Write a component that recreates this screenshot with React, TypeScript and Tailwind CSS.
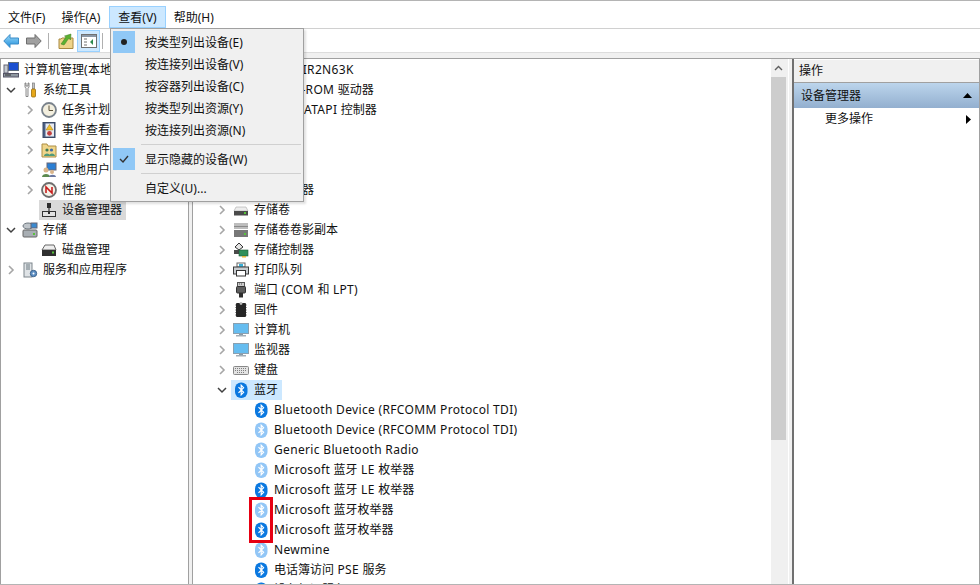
import { ReactNode } from 'react'

type IconName =
  | 'computer' | 'tools' | 'clock' | 'event' | 'share' | 'users' | 'perf' | 'device'
  | 'storage' | 'disk' | 'services' | 'volume' | 'shadow' | 'controller' | 'printer'
  | 'port' | 'chip' | 'monitor' | 'keyboard' | 'btDark' | 'btLight'

function Bluetooth({ light }: { light?: boolean }) {
  return (
    <svg width="16" height="16" viewBox="0 0 16 16">
      <rect x="2" y="0.5" width="12.5" height="15.5" rx="6" fill={light ? '#92c6f6' : '#0a78e0'} />
      <path d="M5.5 5.2 10.6 10.3 8.2 12.8V3.2L10.6 5.7 5.5 10.8" fill="none" stroke="#fff" strokeWidth="1.2" />
    </svg>
  )
}

function TreeIcon({ name }: { name: IconName }) {
  if (name === 'btDark') return <Bluetooth />
  if (name === 'btLight') return <Bluetooth light />
  const shapes: Record<string, ReactNode> = {
    computer: (
      <>
        <rect x="5.5" y="0.5" width="10" height="8" fill="#1a4fd0" stroke="#5b6b7b" />
        <rect x="1" y="3" width="4" height="8" fill="#c4cad0" stroke="#667" />
        <rect x="0.5" y="11.5" width="15" height="3.5" fill="#8f98a1" stroke="#556" />
        <path d="M2 13H8" stroke="#333" />
      </>
    ),
    tools: (
      <>
        <path d="M3 1V5L4 6.5V14.5H6V6.5L7 5V1L6 1V4H4V1Z" fill="#f4f4f4" stroke="#6f6f6f" strokeWidth=".8" />
        <rect x="10.5" y="1" width="2" height="6" fill="#c4c4c4" stroke="#7c7c7c" strokeWidth=".7" />
        <rect x="9.5" y="7" width="4" height="8" rx="1" fill="#e7a81a" stroke="#9a6f0c" strokeWidth=".8" />
      </>
    ),
    clock: (
      <>
        <circle cx="8" cy="8" r="7" fill="#f3efdf" stroke="#7a838c" strokeWidth="1.8" />
        <path d="M8 3.5V8.5H12" fill="none" stroke="#5c523a" />
      </>
    ),
    event: (
      <>
        <rect x="2" y="0.5" width="12" height="15" fill="#4a5f86" stroke="#3c4a66" />
        <rect x="4.5" y="1.5" width="8.5" height="13" fill="#e9ebf0" />
        <path d="M8.5 2.5 12 8H5Z" fill="#f2c12e" stroke="#9a7714" strokeWidth=".5" />
        <circle cx="8.5" cy="11.3" r="2.4" fill="#c23f3f" />
      </>
    ),
    share: (
      <>
        <path d="M1 2H6L7 4H15V15H1Z" fill="#efd58a" stroke="#ad8e44" />
        <circle cx="6" cy="8" r="1.6" fill="#3f7a55" />
        <circle cx="10.5" cy="8" r="1.6" fill="#3f6aa8" />
        <path d="M3 14C3 10.5 9 10.5 9 14ZM8 14C8 10.5 14 10.5 14 14Z" fill="#4f9a7a" />
      </>
    ),
    users: (
      <>
        <rect x="6" y="1" width="9" height="7" fill="#2b7fd4" stroke="#667" />
        <circle cx="5" cy="8" r="2.5" fill="#d9b48a" />
        <path d="M1 15C1 11 9 11 9 15Z" fill="#5c8a4f" />
        <circle cx="11" cy="10" r="2" fill="#d9b48a" />
        <path d="M8 15C8 12 15 12 15 15Z" fill="#6a78a0" />
      </>
    ),
    perf: (
      <>
        <circle cx="8" cy="8" r="7" fill="#f5f2e8" stroke="#6e6e6e" strokeWidth="1.8" />
        <path d="M5 11V5L11 11V5" fill="none" stroke="#c81e1e" strokeWidth="1.6" />
      </>
    ),
    device: (
      <>
        <rect x="6" y="1" width="4" height="5" fill="#2c2c2c" />
        <rect x="7" y="6" width="2" height="3" fill="#777" />
        <rect x="1.5" y="9.5" width="13" height="5" fill="#e2e2e2" stroke="#333" />
        <rect x="7" y="10" width="2" height="2" fill="#2b2b2b" />
      </>
    ),
    storage: (
      <>
        <ellipse cx="6" cy="4" rx="5" ry="3" fill="#bfc5ca" stroke="#6d767e" />
        <rect x="9" y="1" width="6" height="5" fill="#3b8ad0" stroke="#667" />
        <rect x="1" y="8" width="14" height="7" rx="1" fill="#a8aeb3" stroke="#666" />
        <rect x="11" y="11" width="2" height="2" fill="#59c23a" />
      </>
    ),
    disk: (
      <>
        <path d="M4 3H13L15 8H1Z" fill="#eee" stroke="#666" />
        <rect x="1" y="8" width="14" height="6" fill="#303030" />
        <rect x="11" y="9.5" width="2" height="2" fill="#57c43a" />
      </>
    ),
    services: (
      <>
        <rect x="2" y="1" width="8" height="14" fill="#dfe3e6" stroke="#7c858c" />
        <path d="M4 3H8M4 5H8M4 7H8" stroke="#6a7880" />
        <circle cx="11.5" cy="11.5" r="3.2" fill="#5d8fc4" stroke="#3d628c" />
        <circle cx="11.5" cy="11.5" r="1" fill="#fff" />
      </>
    ),
    volume: (
      <>
        <path d="M3 5H13L15 9H1Z" fill="#ededed" stroke="#aaa" strokeWidth=".6" />
        <rect x="1" y="9" width="14" height="4.5" fill="#4a4a4a" />
        <rect x="11" y="10" width="2" height="2" fill="#57c43a" />
      </>
    ),
    shadow: (
      <>
        <rect x="1" y="1" width="14" height="6" fill="#bdbdbd" />
        <path d="M1 4.5H15" stroke="#8a8a8a" />
        <rect x="1" y="8" width="14" height="7" fill="#777" />
        <rect x="11" y="11" width="2" height="2" fill="#57c43a" />
      </>
    ),
    controller: (
      <>
        <path d="M2 5L6 1 10 5 6 8Z" fill="#e4e4e4" stroke="#333" />
        <rect x="1" y="8" width="6" height="4" fill="#4a4a4a" />
        <rect x="6" y="8" width="9" height="6" fill="#2f8f5a" stroke="#1f5a38" strokeWidth=".6" />
        <rect x="9" y="14" width="4" height="1.5" fill="#e2b33c" />
      </>
    ),
    printer: (
      <>
        <rect x="4" y="1" width="8" height="4" fill="#fff" stroke="#666" />
        <rect x="6" y="2" width="4" height="3" fill="#38b0d8" />
        <rect x="0.5" y="5" width="15" height="7" fill="#c9cdd1" stroke="#3c3c3c" />
        <rect x="3.5" y="8.5" width="9" height="5.5" fill="#fff" stroke="#333" />
      </>
    ),
    port: (
      <>
        <rect x="4.5" y="0.5" width="7" height="4" fill="#ccc" stroke="#555" />
        <path d="M6 2H10" stroke="#555" strokeDasharray="1 1" />
        <rect x="3.5" y="4.5" width="9" height="6.5" rx="1" fill="#5e5e5e" stroke="#333" />
        <rect x="6" y="11" width="4" height="4.5" fill="#2e2e2e" />
      </>
    ),
    chip: (
      <>
        <rect x="3" y="1" width="10" height="14" rx="1" fill="#262626" />
        <path d="M2 3H3M2 5.5H3M2 8H3M2 10.5H3M2 13H3M13 3H14M13 5.5H14M13 8H14M13 10.5H14M13 13H14" stroke="#999" />
        <circle cx="8" cy="1.5" r="1.4" fill="#bbb" />
      </>
    ),
    monitor: (
      <>
        <rect x="0.5" y="1.5" width="15" height="10" fill="#66bdf0" stroke="#8aa0b0" />
        <rect x="6" y="12" width="4" height="1" fill="#8a9aa6" />
        <rect x="3" y="13" width="10" height="1.5" fill="#a3aeb6" />
      </>
    ),
    keyboard: (
      <>
        <rect x="0.5" y="4.5" width="15" height="8" rx="1" fill="#e3e3e3" stroke="#888" />
        <path d="M2 6.5H14M2 8.5H14M4 10.5H12" stroke="#7f7f7f" strokeDasharray="1 1" />
      </>
    ),
  }
  return (
    <svg width="16" height="16" viewBox="0 0 16 16">
      {shapes[name]}
    </svg>
  )
}

function Chevron({ open }: { open?: boolean }) {
  return (
    <svg width="10" height="10" viewBox="0 0 10 10" className="shrink-0">
      {open ? (
        <path d="M1 3 5 7 9 3" fill="none" stroke="#404040" strokeWidth="1.5" />
      ) : (
        <path d="M3 1 7 5 3 9" fill="none" stroke="#a6a6a6" strokeWidth="1.6" />
      )}
    </svg>
  )
}

// latin runs render a little narrower than Segoe UI, so they get some tracking
function Label({ text }: { text: string }) {
  const parts = text.split(/([\x00-\x7f]+)/).filter(Boolean)
  return (
    <span>
      {parts.map((p, i) =>
        /^[\x00-\x7f]/.test(p) ? (
          <span key={i} className="tracking-[0.33px]">{p}</span>
        ) : (
          <span key={i}>{p}</span>
        ),
      )}
    </span>
  )
}

type RowProps = {
  indent: string
  icon: IconName
  label: string
  state?: 'open' | 'closed'
  selected?: string
  root?: boolean
}

function Row({ indent, icon, label, state, selected, root }: RowProps) {
  return (
    <div className={`flex h-5 items-center whitespace-nowrap ${indent}`}>
      {!root && (
        <span className="flex w-[14px] shrink-0 items-center">
          {state && <Chevron open={state === 'open'} />}
        </span>
      )}
      <span className={`flex h-5 items-center gap-[5px] pl-[2px] pr-[4px] ${selected ?? ''}`}>
        <TreeIcon name={icon} />
        <Label text={label} />
      </span>
    </div>
  )
}

const leftRows: RowProps[] = [
  { indent: 'pl-0', icon: 'computer', label: '计算机管理(本地)', root: true },
  { indent: 'pl-[5px]', icon: 'tools', label: '系统工具', state: 'open' },
  { indent: 'pl-[24px]', icon: 'clock', label: '任务计划程序', state: 'closed' },
  { indent: 'pl-[24px]', icon: 'event', label: '事件查看器', state: 'closed' },
  { indent: 'pl-[24px]', icon: 'share', label: '共享文件夹', state: 'closed' },
  { indent: 'pl-[24px]', icon: 'users', label: '本地用户和组', state: 'closed' },
  { indent: 'pl-[24px]', icon: 'perf', label: '性能', state: 'closed' },
  { indent: 'pl-[24px]', icon: 'device', label: '设备管理器', selected: 'bg-[#d9d9d9]' },
  { indent: 'pl-[5px]', icon: 'storage', label: '存储', state: 'open' },
  { indent: 'pl-[24px]', icon: 'disk', label: '磁盘管理' },
  { indent: 'pl-[5px]', icon: 'services', label: '服务和应用程序', state: 'closed' },
]

const hw = 'pl-[24px]'
const child = 'pl-[44px]'
const centerRows: RowProps[] = [
  { indent: 'pl-[4px]', icon: 'computer', label: 'DESKTOP-QIR2N63K', state: 'open' },
  { indent: hw, icon: 'volume', label: 'DVD/CD-ROM 驱动器', state: 'closed' },
  { indent: hw, icon: 'controller', label: 'IDE ATA/ATAPI 控制器', state: 'closed' },
  { indent: hw, icon: 'port', label: '便携设备', state: 'closed' },
  { indent: hw, icon: 'chip', label: '处理器', state: 'closed' },
  { indent: hw, icon: 'chip', label: '传感器', state: 'closed' },
  { indent: hw, icon: 'volume', label: '磁盘驱动器', state: 'closed' },
  { indent: hw, icon: 'volume', label: '存储卷', state: 'closed' },
  { indent: hw, icon: 'shadow', label: '存储卷卷影副本', state: 'closed' },
  { indent: hw, icon: 'controller', label: '存储控制器', state: 'closed' },
  { indent: hw, icon: 'printer', label: '打印队列', state: 'closed' },
  { indent: hw, icon: 'port', label: '端口 (COM 和 LPT)', state: 'closed' },
  { indent: hw, icon: 'chip', label: '固件', state: 'closed' },
  { indent: hw, icon: 'monitor', label: '计算机', state: 'closed' },
  { indent: hw, icon: 'monitor', label: '监视器', state: 'closed' },
  { indent: hw, icon: 'keyboard', label: '键盘', state: 'closed' },
  { indent: hw, icon: 'btDark', label: '蓝牙', state: 'open', selected: 'bg-[#cce8ff]' },
  { indent: child, icon: 'btDark', label: 'Bluetooth Device (RFCOMM Protocol TDI)' },
  { indent: child, icon: 'btLight', label: 'Bluetooth Device (RFCOMM Protocol TDI)' },
  { indent: child, icon: 'btLight', label: 'Generic Bluetooth Radio' },
  { indent: child, icon: 'btLight', label: 'Microsoft 蓝牙 LE 枚举器' },
  { indent: child, icon: 'btDark', label: 'Microsoft 蓝牙 LE 枚举器' },
  { indent: child, icon: 'btLight', label: 'Microsoft 蓝牙枚举器' },
  { indent: child, icon: 'btDark', label: 'Microsoft 蓝牙枚举器' },
  { indent: child, icon: 'btLight', label: 'Newmine' },
  { indent: child, icon: 'btDark', label: '电话簿访问 PSE 服务' },
  { indent: child, icon: 'btDark', label: '设备标识服务' },
]

const menuItems = ['按类型列出设备(E)', '按连接列出设备(V)', '按容器列出设备(C)', '按类型列出资源(Y)', '按连接列出资源(N)']

function ViewMenu() {
  return (
    <div className="absolute left-[110px] top-[27px] z-10 flex w-[194px] flex-col border border-[#a0a0a0] bg-[#f0f0f0] p-[2px] text-[12px] shadow-[2px_2px_2px_rgba(0,0,0,0.12)]">
      {menuItems.map((item, i) => (
        <div key={item} className="flex h-[22px] items-center">
          <span className={`flex h-[22px] w-[22px] items-center justify-center ${i === 0 ? 'bg-[#90c8f6]' : ''}`}>
            {i === 0 && <span className="h-[6px] w-[6px] rounded-full bg-[#222]" />}
          </span>
          <span className="pl-[10px] pt-[2px]">{item}</span>
        </div>
      ))}
      <div className="my-[3px] ml-[28px] h-[1px] bg-[#d0d0d0]" />
      <div className="flex h-[22px] items-center">
        <span className="flex h-[22px] w-[22px] items-center justify-center bg-[#90c8f6]">
          <svg width="10" height="8" viewBox="0 0 10 8">
            <path d="M1 4 4 7 9 1" fill="none" stroke="#333" strokeWidth="1.4" />
          </svg>
        </span>
        <span className="pl-[10px] pt-[2px]">显示隐藏的设备(W)</span>
      </div>
      <div className="my-[3px] ml-[28px] h-[1px] bg-[#d0d0d0]" />
      <div className="flex h-[22px] items-center pl-[32px] pt-[2px]">自定义(U)...</div>
    </div>
  )
}

export default function App() {
  return (
    <div className="relative flex h-[585px] w-[980px] flex-col overflow-hidden border-y border-[#b4b4b4] bg-white font-['Noto_Sans','Noto_Sans_CJK_SC',sans-serif] text-[12px] text-[#111]">
      {/* Menu bar */}
      <div className="flex h-[28px] shrink-0 items-end border-b border-[#d0d0d0]">
        <span className="flex h-[22px] items-center pl-[8px] pr-[8px] pt-[2px]">文件(F)</span>
        <span className="flex h-[22px] items-center pl-[8px] pr-[9px] pt-[2px]">操作(A)</span>
        <span className="flex h-[22px] items-center border border-[#99d1ff] bg-[#cce8ff] px-[8px] pt-[1px]">查看(V)</span>
        <span className="flex h-[22px] items-center px-[8px] pt-[2px]">帮助(H)</span>
      </div>

      {/* Toolbar */}
      <div className="flex h-[23px] shrink-0 items-center pl-[3px]">
        <svg width="16" height="14" viewBox="0 0 16 14">
          <defs>
            <linearGradient id="back" x1="0" y1="0" x2="0" y2="1">
              <stop offset="0" stopColor="#9ad8f8" />
              <stop offset="1" stopColor="#1f8fdc" />
            </linearGradient>
          </defs>
          <path d="M7 .5 .8 7 7 13.5V10H15.5V4H7Z" fill="url(#back)" stroke="#3a8cc8" />
        </svg>
        <svg width="16" height="14" viewBox="0 0 16 14" className="ml-[7px]">
          <path d="M9 .5 15.2 7 9 13.5V10H.5V4H9Z" fill="#a0a0a0" stroke="#6e6e6e" />
        </svg>
        <span className="ml-[6px] h-[16px] w-[1px] bg-[#b0b0b0]" />
        <svg width="16" height="16" viewBox="0 0 16 16" className="ml-[9px]">
          <path d="M1 6H3L4 5H15V15.5H1Z" fill="#efd48a" stroke="#a88840" />
          <path d="M3 11C5 9 6 6 8 4L6.5 3 13 1 12.5 7 11 5.5C9 7 8 10 6 12Z" fill="#5bb030" stroke="#3b7a20" strokeWidth=".5" />
        </svg>
        <span className="ml-[3px] flex h-[22px] w-[23px] items-center justify-center border border-[#99d1ff] bg-[#cce8ff]">
          <svg width="16" height="14" viewBox="0 0 16 14">
            <rect x=".5" y=".5" width="15" height="13" fill="#fff" stroke="#707070" />
            <rect x="1" y="1" width="14" height="2" fill="#8a97a6" />
            <path d="M3 5H6M3 8H6M3 11H6" stroke="#707070" />
            <path d="M12 5V11L9 8Z" fill="#2d8a4e" />
          </svg>
        </span>
        <span className="ml-[2px] h-[16px] w-[1px] bg-[#b0b0b0]" />
      </div>

      {/* Strip above the panes */}
      <div className="h-[6px] shrink-0 border-t border-[#dcdcdc] bg-[#f0f0f0]" />

      {/* Panes */}
      <div className="flex min-h-0 flex-1 border-t border-[#a0a0a0]">
        <div className="w-[188px] shrink-0 overflow-hidden border-l border-[#a0a0a0] pt-[1px]">
          {leftRows.map((r) => (
            <Row key={r.label} {...r} />
          ))}
        </div>
        <div className="w-[5px] shrink-0 border-x border-[#a0a0a0] bg-[#f0f0f0]" />
        <div className="relative min-w-0 flex-1 overflow-hidden pt-[1px]">
          {centerRows.map((r) => (
            <Row key={r.label + r.icon} {...r} />
          ))}
          {/* Red annotation around the two icons */}
          <div className="absolute left-[56px] top-[438px] h-[46px] w-[24px] border-[3px] border-[#e60012]" />
        </div>
        <div className="w-[17px] shrink-0 bg-[#f0f0f0]">
          <div className="flex h-[18px] w-[15px] items-center justify-center">
            <svg width="9" height="6" viewBox="0 0 9 6">
              <path d="M1 5 4.5 1.5 8 5" fill="none" stroke="#606060" strokeWidth="1.4" />
            </svg>
          </div>
          <div className="h-[363px] w-[15px] bg-[#cdcdcd]" />
        </div>
        <div className="w-[4px] shrink-0 border-l border-white bg-[#f0f0f0]" />
        <div className="flex w-[188px] shrink-0 flex-col border-l-2 border-r border-l-[#707070] border-r-[#a0a0a0]">
          <div className="mt-[1px] flex h-[23px] shrink-0 items-center border-b border-[#a0a0a0] bg-[#f0f0f0] pl-[5px]">操作</div>
          <div className="flex h-[25px] shrink-0 items-center justify-between bg-gradient-to-b from-[#bcd5ec] to-[#93afcf] pl-[7px] pr-[7px]">
            <span>设备管理器</span>
            <svg width="9" height="5" viewBox="0 0 9 5">
              <path d="M4.5 0 9 5H0Z" fill="#000" />
            </svg>
          </div>
          <div className="flex h-[22px] shrink-0 items-center justify-between pl-[31px] pr-[8px]">
            <span>更多操作</span>
            <svg width="5" height="9" viewBox="0 0 5 9">
              <path d="M0 0 5 4.5 0 9Z" fill="#000" />
            </svg>
          </div>
        </div>
      </div>
      <ViewMenu />
    </div>
  )
}
